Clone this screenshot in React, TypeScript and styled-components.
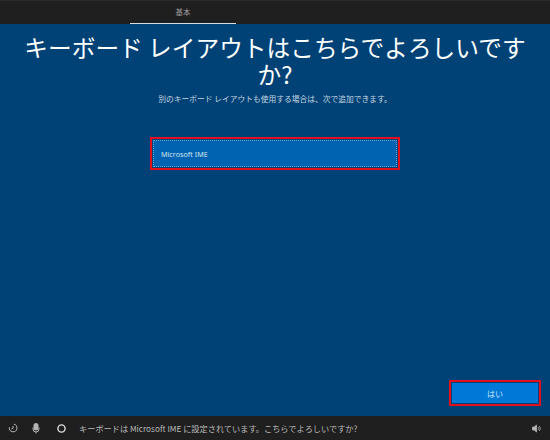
import React from "react";
import styled, { createGlobalStyle } from "styled-components";

const Global = createGlobalStyle`
  html, body { margin: 0; padding: 0; background: #1f1f1f; }
  body { font-family: "Noto Sans CJK JP", "Noto Sans", sans-serif; }
`;

const Screen = styled.div`
  width: 550px;
  height: 440px;
  display: flex;
  flex-direction: column;
  overflow: hidden;
`;

const TopBar = styled.header`
  height: 24px;
  flex: none;
  background: #1f1f1f;
  border-top: 1px solid #2a2a2a;
  box-sizing: border-box;
  padding-left: 130px;
  display: flex;
`;

const Tab = styled.div`
  width: 106px;
  height: 24px;
  box-sizing: border-box;
  border-bottom: 2px solid #d5dde2;
  color: #9a9a9a;
  font-size: 7.5px;
  line-height: 22px;
  text-align: center;
`;

const Main = styled.main`
  flex: 1;
  background: #004275;
  display: flex;
  flex-direction: column;
  align-items: center;
  padding-top: 10px;
  box-sizing: border-box;
`;

const Title = styled.h1`
  margin: 0;
  width: 510px;
  font-family: "Noto Sans CJK JP", sans-serif;
  font-weight: 400;
  font-size: 23.7px;
  line-height: 27px;
  color: #fff;
  text-align: center;
`;

const Sub = styled.p`
  margin: 4px 0 0;
  font-size: 7.75px;
  line-height: 14px;
  color: #c6d5e1;
  text-align: center;
`;

const OptionFrame = styled.div`
  margin-top: 31px;
  width: 250px;
  height: 33px;
  box-sizing: border-box;
  border: 2px solid #e0101e;
  padding: 1px;
`;

const Option = styled.div`
  height: 100%;
  box-sizing: border-box;
  background: #0063b1;
  border: 1px dotted #6fa3cc;
  padding-left: 7px;
  display: flex;
  align-items: center;
  color: #d5e4f0;
  font-family: "Noto Sans", sans-serif;
  font-size: 7.2px;
`;

const Footer = styled.div`
  margin-top: auto;
  align-self: stretch;
  display: flex;
  justify-content: flex-end;
  padding: 0 9px 10px 0;
`;

const ButtonFrame = styled.div`
  width: 92px;
  height: 26px;
  box-sizing: border-box;
  border: 2px solid #e0101e;
  padding: 1px;
`;

const YesButton = styled.button`
  width: 100%;
  height: 100%;
  display: block;
  padding: 0;
  border: none;
  background: #0078d7;
  color: #cfe6f8;
  font-family: "Noto Sans CJK JP", sans-serif;
  font-size: 8px;
`;

const BottomBar = styled.footer`
  height: 24px;
  flex: none;
  background: #1f1f1f;
  display: flex;
  align-items: center;
  padding: 0 9px 0 8px;
  box-sizing: border-box;
`;

const IconSlot = styled.span<{ $w: number }>`
  width: ${(p) => p.$w}px;
  flex: none;
  display: flex;
  align-items: center;
`;

const Status = styled.span`
  flex: 1;
  color: #b9b9b9;
  font-size: 8.2px;
  white-space: nowrap;
`;

const Ico = styled.svg`
  display: block;
  stroke: #b5b5b5;
  fill: none;
`;

const RingIcon = styled(Ico)`
  stroke: #e0e0e0;
`;

export default function App() {
  return (
    <Screen>
      <Global />
      <TopBar>
        <Tab>基本</Tab>
      </TopBar>
      <Main>
        <Title>キーボード レイアウトはこちらでよろしいですか?</Title>
        <Sub>別のキーボード レイアウトも使用する場合は、次で追加できます。</Sub>
        <OptionFrame>
          <Option>Microsoft IME</Option>
        </OptionFrame>
        <Footer>
          <ButtonFrame>
            <YesButton>はい</YesButton>
          </ButtonFrame>
        </Footer>
      </Main>
      <BottomBar>
        <IconSlot $w={24}>
          <Ico width="10" height="10" viewBox="0 0 10 10" strokeWidth="1">
            <path d="M5.8 1.2A3.8 3.8 0 1 1 1.4 4.2" />
            <path d="M5 3V5.2L3.4 6" />
          </Ico>
        </IconSlot>
        <IconSlot $w={25}>
          <Ico width="8" height="11" viewBox="0 0 8 11" strokeWidth="1">
            <rect x="2" y="0.5" width="4" height="6.5" rx="1.6" fill="#b5b5b5" />
            <path d="M1 4.5V6A3 3 0 0 0 7 6V4.5M4 9V10.5" />
          </Ico>
        </IconSlot>
        <IconSlot $w={22}>
          <RingIcon width="9" height="9" viewBox="0 0 9 9" strokeWidth="1.4">
            <circle cx="4.5" cy="4.5" r="3.6" />
          </RingIcon>
        </IconSlot>
        <Status>キーボードは Microsoft IME に設定されています。こちらでよろしいですか?</Status>
        <Ico width="9" height="9" viewBox="0 0 9 9" strokeWidth="0.8">
          <path d="M0.5 3H2.2L4.5 1V8L2.2 6H0.5Z" fill="#b5b5b5" />
          <path d="M6 3A2 2 0 0 1 6 6M7.2 2A3.4 3.4 0 0 1 7.2 7" />
        </Ico>
      </BottomBar>
    </Screen>
  );
}
